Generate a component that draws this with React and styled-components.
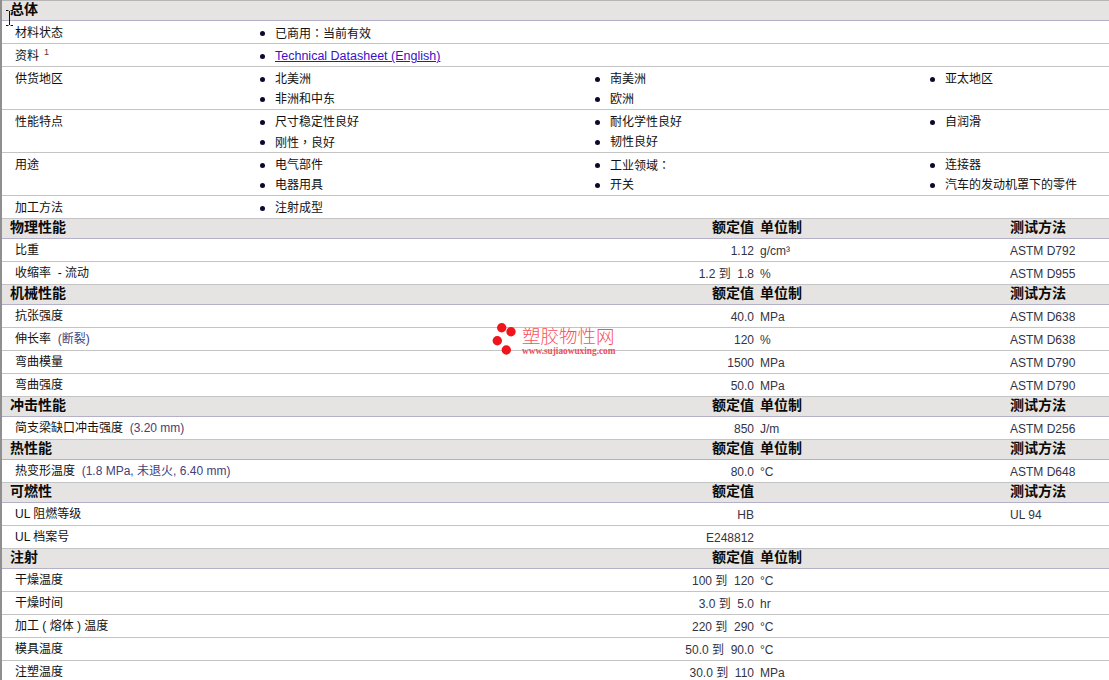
import React from 'react';
import styled, { createGlobalStyle } from 'styled-components';

const GlobalStyle = createGlobalStyle`
    html, body {
        margin: 0;
        padding: 0;
        background: #ffffff;
        overflow: hidden;
    }
    body {
        font-family: "Liberation Sans", "Noto Sans CJK SC", sans-serif;
        font-size: 12px;
        color: #333333;
    }
`;

const generalRows = [
    { label: '材料状态', height: 23, items: ['已商用：当前有效'] },
    { label: '资料', note: '1', height: 23, link: 'Technical Datasheet (English)' },
    { label: '供货地区', height: 43, items: ['北美洲', '南美洲', '亚太地区', '非洲和中东', '欧洲'] },
    { label: '性能特点', height: 43, items: ['尺寸稳定性良好', '耐化学性良好', '自润滑', '刚性，良好', '韧性良好'] },
    { label: '用途', height: 43, items: ['电气部件', '工业领域：', '连接器', '电器用具', '开关', '汽车的发动机罩下的零件'] },
    { label: '加工方法', height: 23, items: ['注射成型'] },
];

const sections = [
    {
        title: '物理性能', unit: true, test: true,
        rows: [
            { label: '比重', value: '1.12', unit: 'g/cm³', test: 'ASTM D792' },
            { label: '收缩率  - 流动', value: '1.2 到  1.8', unit: '%', test: 'ASTM D955' },
        ],
    },
    {
        title: '机械性能', unit: true, test: true,
        rows: [
            { label: '抗张强度', value: '40.0', unit: 'MPa', test: 'ASTM D638' },
            { label: '伸长率', extra: '  (断裂)', value: '120', unit: '%', test: 'ASTM D638' },
            { label: '弯曲模量', value: '1500', unit: 'MPa', test: 'ASTM D790' },
            { label: '弯曲强度', value: '50.0', unit: 'MPa', test: 'ASTM D790' },
        ],
    },
    {
        title: '冲击性能', unit: true, test: true,
        rows: [
            { label: '简支梁缺口冲击强度', extra: '  (3.20 mm)', value: '850', unit: 'J/m', test: 'ASTM D256' },
        ],
    },
    {
        title: '热性能', unit: true, test: true,
        rows: [
            { label: '热变形温度', extra: '  (1.8 MPa, 未退火, 6.40 mm)', value: '80.0', unit: '°C', test: 'ASTM D648' },
        ],
    },
    {
        title: '可燃性', unit: false, test: true,
        rows: [
            { label: 'UL 阻燃等级', value: 'HB', unit: '', test: 'UL 94' },
            { label: 'UL 档案号', value: 'E248812', unit: '', test: '' },
        ],
    },
    {
        title: '注射', unit: true, test: false,
        rows: [
            { label: '干燥温度', value: '100 到  120', unit: '°C', test: '' },
            { label: '干燥时间', value: '3.0 到  5.0', unit: 'hr', test: '' },
            { label: '加工 ( 熔体 ) 温度', value: '220 到  290', unit: '°C', test: '' },
            { label: '模具温度', value: '50.0 到  90.0', unit: '°C', test: '' },
            { label: '注塑温度', value: '30.0 到  110', unit: 'MPa', test: '' },
        ],
    },
];

// full-width punctuation sits centred in the reference, the TC face draws it that way
const withPunct = (text) =>
    text.split(/([：，])/).map((part, i) =>
        i % 2 ? <Punct key={i}>{part}</Punct> : part
    );

const App = () => (
    <Page>
        <GlobalStyle />
        <HeaderRow $first>
            <HeaderTitle>总体</HeaderTitle>
        </HeaderRow>
        {generalRows.map((row) => (
            <GeneralRow key={row.label} $height={row.height}>
                <Label>
                    {row.label}
                    {row.note && <Note>{row.note}</Note>}
                </Label>
                <BulletGrid>
                    {row.link && (
                        <Bullet>
                            <DatasheetLink href="#datasheet">{row.link}</DatasheetLink>
                        </Bullet>
                    )}
                    {row.items && row.items.map((item) => <Bullet key={item}><span>{withPunct(item)}</span></Bullet>)}
                </BulletGrid>
            </GeneralRow>
        ))}
        {sections.map((section) => (
            <section key={section.title}>
                <HeaderRow>
                    <HeaderTitle>{section.title}</HeaderTitle>
                    <HeaderValue>额定值</HeaderValue>
                    <HeaderUnit>{section.unit && '单位制'}</HeaderUnit>
                    <HeaderTitle>{section.test && '测试方法'}</HeaderTitle>
                </HeaderRow>
                {section.rows.map((row) => (
                    <DataRow key={row.label}>
                        <Label>
                            {row.label}
                            {row.extra && <Extra>{row.extra}</Extra>}
                        </Label>
                        <Value>{row.value}</Value>
                        <Cell>{row.unit}</Cell>
                        <Cell>{row.test}</Cell>
                    </DataRow>
                ))}
            </section>
        ))}
        <Watermark>
            <svg width="30" height="34" viewBox="0 0 30 34">
                <circle cx="9.700" cy="5.700" r="4.700" fill="#f0141c" />
                <circle cx="19" cy="9.700" r="4.700" fill="#f0141c" />
                <circle cx="5.300" cy="18.700" r="4.700" fill="#f0141c" />
                <circle cx="14.300" cy="28" r="4.700" fill="#f0141c" />
            </svg>
            <WatermarkText>
                <WatermarkName>塑胶物性网</WatermarkName>
                <WatermarkUrl>www.sujiaowuxing.com</WatermarkUrl>
            </WatermarkText>
        </Watermark>
        <TextCursor width="9" height="16" viewBox="0 0 9 16">
            <path d="M1 .5h2.500M5.500 .5H8M4.500 1v14M1 15.500h2.500M5.500 15.500H8" stroke="#111" strokeWidth="1" fill="none" />
        </TextCursor>
    </Page>
);

export default App;

const Page = styled.main`
    position: relative;
    height: 680px;
    overflow: hidden;
    border-left: 2px solid #8f8f8f;
`;

const HeaderRow = styled.div`
    display: grid;
    grid-template-columns: 684px 60px 256px 1fr;
    align-items: center;
    box-sizing: border-box;
    height: ${(props) => (props.$first ? '21px' : '20px')};
    padding: 0 0 3px 8px;
    background: #e5e4e2;
    border-top: ${(props) => (props.$first ? '1px solid #b5b5b5' : 'none')};
    border-bottom: 1px solid #b4b0c8;
    font-size: 14px;
    line-height: 16px;
    font-weight: 700;
    color: #0a0a0a;
`;

const HeaderTitle = styled.div`
    white-space: nowrap;
`;

const HeaderValue = styled.div`
    display: flex;
    justify-content: flex-end;
    white-space: nowrap;
`;

const HeaderUnit = styled.div`
    padding-left: 6px;
    white-space: nowrap;
`;

const GeneralRow = styled.div`
    display: grid;
    grid-template-columns: 245px 1fr;
    box-sizing: border-box;
    height: ${(props) => props.$height}px;
    padding: 3px 0 0 13px;
    border-bottom: 1px solid #c4c4c4;
    line-height: 18px;
`;

const BulletGrid = styled.ul`
    display: grid;
    grid-template-columns: repeat(3, 335px);
    grid-auto-rows: 20px;
    margin: 0;
    padding: 0;
    list-style: none;
`;

const Bullet = styled.li`
    display: flex;
    align-items: center;
    height: 18px;
    color: #111111;
    white-space: nowrap;

    &::before {
        content: '';
        width: 5px;
        height: 5px;
        margin-right: 10px;
        border-radius: 50%;
        background: #0a0a30;
        flex: none;
    }
`;

const DatasheetLink = styled.a`
    font-size: 12.500px;
    color: #3a10c8;
    text-decoration: underline;
`;

const Punct = styled.span`
    font-family: "Noto Sans CJK TC", sans-serif;
`;

const Label = styled.div`
    color: #111111;
    white-space: pre;
`;

const Note = styled.sup`
    margin-left: 5px;
    font-size: 9px;
    line-height: 0;
    color: #553344;
`;

const Extra = styled.span`
    color: #44407a;
`;

const DataRow = styled.div`
    display: grid;
    grid-template-columns: 400px 339px 250px 1fr;
    box-sizing: border-box;
    height: 23px;
    padding: 2px 0 0 13px;
    border-bottom: 1px solid #c4c4c4;
    line-height: 18px;
`;

const Value = styled.div`
    padding-top: 1px;
    text-align: right;
    white-space: pre;
    color: #333344;
`;

const Cell = styled.div`
    padding: 1px 0 0 6px;
    white-space: nowrap;
    color: #333344;
`;

const Watermark = styled.div`
    position: absolute;
    left: 490px;
    top: 322px;
    display: flex;
    align-items: flex-start;
`;

const WatermarkText = styled.div`
    display: flex;
    flex-direction: column;
    padding-top: 4px;
`;

const WatermarkName = styled.div`
    font-size: 18.500px;
    line-height: 21px;
    font-weight: 300;
    color: #f8505a;
`;

const WatermarkUrl = styled.div`
    font-family: "Liberation Serif", serif;
    font-size: 9.300px;
    font-weight: 700;
    line-height: 8px;
    color: #f0505a;
`;

const TextCursor = styled.svg`
    position: absolute;
    left: 3px;
    top: 10px;
`;
